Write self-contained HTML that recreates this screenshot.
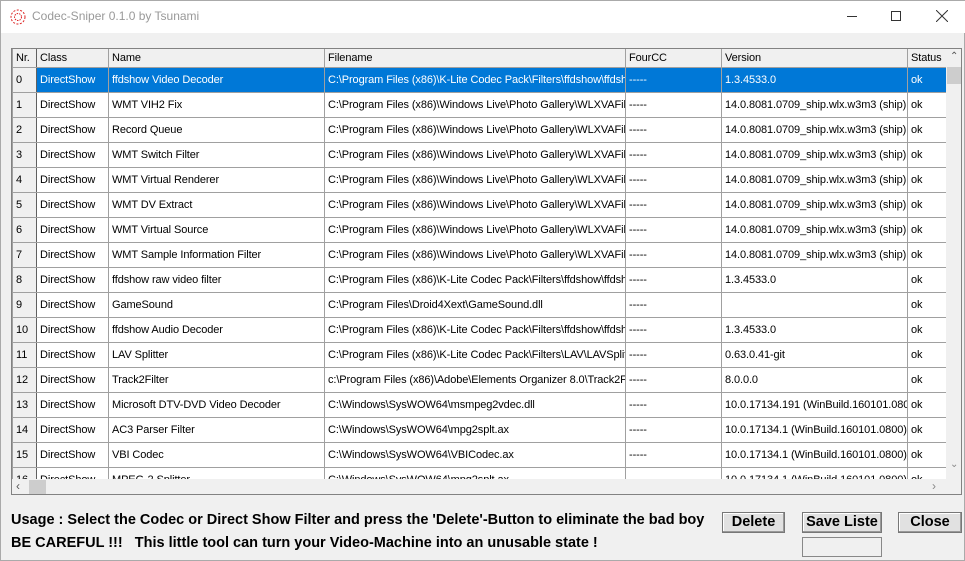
<!DOCTYPE html>
<html><head><meta charset="utf-8"><style>
*{margin:0;padding:0;box-sizing:border-box}
body{width:965px;height:561px;background:#f0f0f0;font-family:"Liberation Sans",Arial,sans-serif;position:relative;overflow:hidden;border:1px solid #aaa}
.title{position:absolute;left:0;top:0;width:965px;height:32px;background:#fff}
.title span{position:absolute;left:31px;top:8px;font-size:12px;color:#999}
.grid{position:absolute;left:10px;top:47px;width:951px;height:447px;border:1px solid #828282;background:#fff;overflow:hidden}
table{position:absolute;left:0;top:0;border-collapse:collapse;table-layout:fixed;font-size:11px;letter-spacing:-0.1px;color:#000}
td{height:25px;border:1px solid #a0a0a0;padding:0 0 0 3px;white-space:nowrap;overflow:hidden;border-top:none}
tr.h td{height:18px;background:#f0f0f0;border-bottom:1px solid #a0a0a0;border-top:none}
td.n{background:#f0f0f0;border-right:1px solid #606060}
tr.s td{background:#0078d7;color:#fff}
tr.s td.n{background:#f0f0f0;color:#000}
.vs{position:absolute;left:934px;top:0;width:16px;height:430px;background:#f0f0f0}
.hs{position:absolute;left:0;top:430px;width:950px;height:16px;background:#f0f0f0}
.b{position:absolute;font-weight:bold;font-size:14.5px}
.btn{position:absolute;top:511px;height:21px;border:1px solid #777;background:#e1e1e1;font-weight:bold;font-size:14.5px;text-align:center;line-height:19px;box-shadow:inset -1px -1px #999,inset 1px 1px #fff}
</style></head><body>
<div class="title"><svg style="position:absolute;left:8px;top:7px" width="18" height="18"><circle cx="9" cy="9" r="7" fill="none" stroke="#d22" stroke-dasharray="2 1.5"/><circle cx="9" cy="9" r="3.5" fill="none" stroke="#d22" stroke-dasharray="1.5 1"/></svg><span>Codec-Sniper 0.1.0 by Tsunami</span>
<div style="position:absolute;left:846px;top:15px;width:10px;height:1px;background:#333"></div>
<div style="position:absolute;left:890px;top:10px;width:10px;height:10px;border:1px solid #333"></div>
<svg style="position:absolute;left:935px;top:9px" width="12" height="12"><path d="M0 0L12 12M12 0L0 12" stroke="#333"/></svg></div>
<div class="grid">
<table style="width:934px">
<colgroup><col style="width:24px"><col style="width:72px"><col style="width:216px"><col style="width:301px"><col style="width:96px"><col style="width:186px"><col style="width:39px"></colgroup>
<tr class="h"><td class="n">Nr.</td><td>Class</td><td>Name</td><td>Filename</td><td>FourCC</td><td>Version</td><td>Status</td></tr>
<tr class="s"><td class="n">0</td><td>DirectShow</td><td>ffdshow Video Decoder</td><td>C:\Program Files (x86)\K-Lite Codec Pack\Filters\ffdshow\ffdshow.ax</td><td>-----</td><td>1.3.4533.0</td><td>ok</td></tr>
<tr><td class="n">1</td><td>DirectShow</td><td>WMT VIH2 Fix</td><td>C:\Program Files (x86)\Windows Live\Photo Gallery\WLXVAFilt.dll</td><td>-----</td><td>14.0.8081.0709_ship.wlx.w3m3 (ship)</td><td>ok</td></tr>
<tr><td class="n">2</td><td>DirectShow</td><td>Record Queue</td><td>C:\Program Files (x86)\Windows Live\Photo Gallery\WLXVAFilt.dll</td><td>-----</td><td>14.0.8081.0709_ship.wlx.w3m3 (ship)</td><td>ok</td></tr>
<tr><td class="n">3</td><td>DirectShow</td><td>WMT Switch Filter</td><td>C:\Program Files (x86)\Windows Live\Photo Gallery\WLXVAFilt.dll</td><td>-----</td><td>14.0.8081.0709_ship.wlx.w3m3 (ship)</td><td>ok</td></tr>
<tr><td class="n">4</td><td>DirectShow</td><td>WMT Virtual Renderer</td><td>C:\Program Files (x86)\Windows Live\Photo Gallery\WLXVAFilt.dll</td><td>-----</td><td>14.0.8081.0709_ship.wlx.w3m3 (ship)</td><td>ok</td></tr>
<tr><td class="n">5</td><td>DirectShow</td><td>WMT DV Extract</td><td>C:\Program Files (x86)\Windows Live\Photo Gallery\WLXVAFilt.dll</td><td>-----</td><td>14.0.8081.0709_ship.wlx.w3m3 (ship)</td><td>ok</td></tr>
<tr><td class="n">6</td><td>DirectShow</td><td>WMT Virtual Source</td><td>C:\Program Files (x86)\Windows Live\Photo Gallery\WLXVAFilt.dll</td><td>-----</td><td>14.0.8081.0709_ship.wlx.w3m3 (ship)</td><td>ok</td></tr>
<tr><td class="n">7</td><td>DirectShow</td><td>WMT Sample Information Filter</td><td>C:\Program Files (x86)\Windows Live\Photo Gallery\WLXVAFilt.dll</td><td>-----</td><td>14.0.8081.0709_ship.wlx.w3m3 (ship)</td><td>ok</td></tr>
<tr><td class="n">8</td><td>DirectShow</td><td>ffdshow raw video filter</td><td>C:\Program Files (x86)\K-Lite Codec Pack\Filters\ffdshow\ffdshow.ax</td><td>-----</td><td>1.3.4533.0</td><td>ok</td></tr>
<tr><td class="n">9</td><td>DirectShow</td><td>GameSound</td><td>C:\Program Files\Droid4Xext\GameSound.dll</td><td>-----</td><td></td><td>ok</td></tr>
<tr><td class="n">10</td><td>DirectShow</td><td>ffdshow Audio Decoder</td><td>C:\Program Files (x86)\K-Lite Codec Pack\Filters\ffdshow\ffdshow.ax</td><td>-----</td><td>1.3.4533.0</td><td>ok</td></tr>
<tr><td class="n">11</td><td>DirectShow</td><td>LAV Splitter</td><td>C:\Program Files (x86)\K-Lite Codec Pack\Filters\LAV\LAVSplitter.ax</td><td>-----</td><td>0.63.0.41-git</td><td>ok</td></tr>
<tr><td class="n">12</td><td>DirectShow</td><td>Track2Filter</td><td>c:\Program Files (x86)\Adobe\Elements Organizer 8.0\Track2Filter.ax</td><td>-----</td><td>8.0.0.0</td><td>ok</td></tr>
<tr><td class="n">13</td><td>DirectShow</td><td>Microsoft DTV-DVD Video Decoder</td><td>C:\Windows\SysWOW64\msmpeg2vdec.dll</td><td>-----</td><td>10.0.17134.191 (WinBuild.160101.0800)</td><td>ok</td></tr>
<tr><td class="n">14</td><td>DirectShow</td><td>AC3 Parser Filter</td><td>C:\Windows\SysWOW64\mpg2splt.ax</td><td>-----</td><td>10.0.17134.1 (WinBuild.160101.0800)</td><td>ok</td></tr>
<tr><td class="n">15</td><td>DirectShow</td><td>VBI Codec</td><td>C:\Windows\SysWOW64\VBICodec.ax</td><td>-----</td><td>10.0.17134.1 (WinBuild.160101.0800)</td><td>ok</td></tr>
<tr><td class="n">16</td><td>DirectShow</td><td>MPEG-2 Splitter</td><td>C:\Windows\SysWOW64\mpg2splt.ax</td><td>-----</td><td>10.0.17134.1 (WinBuild.160101.0800)</td><td>ok</td></tr>
</table>
<div class="vs"><div style="position:absolute;left:1px;top:18px;width:14px;height:17px;background:#cdcdcd"></div><span style="position:absolute;left:4px;top:2px;font-size:10px;color:#555">&#8963;</span><span style="position:absolute;left:4px;top:410px;font-size:10px;color:#888">&#8964;</span></div>
<div class="hs"><div style="position:absolute;left:17px;top:1px;width:17px;height:14px;background:#cdcdcd"></div><span style="position:absolute;left:4px;top:0;font-size:12px;color:#555">&lsaquo;</span><span style="position:absolute;left:920px;top:0;font-size:12px;color:#888">&rsaquo;</span></div>
</div>
<div class="b" style="left:10px;top:511px">Usage : Select the Codec or Direct Show Filter and press the 'Delete'-Button to eliminate the bad boy</div>
<div class="b" style="left:10px;top:534px">BE CAREFUL !!!&nbsp;&nbsp; This little tool can turn your Video-Machine into an unusable state !</div>
<div class="btn" style="left:721px;width:63px">Delete</div>
<div class="btn" style="left:801px;width:80px">Save Liste</div>
<div class="btn" style="left:897px;width:64px">Close</div>
<div style="position:absolute;left:801px;top:536px;width:80px;height:20px;border:1px solid #888;background:#f0f0f0"></div>
</body></html>
